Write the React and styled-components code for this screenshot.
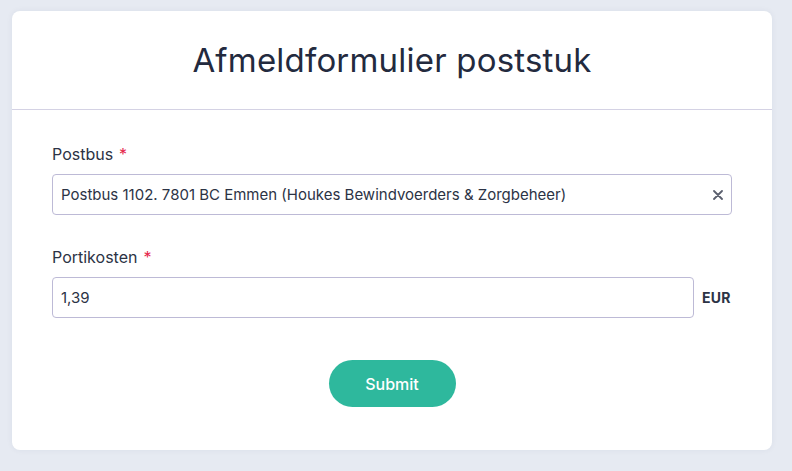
import React from "react";
import styled, { createGlobalStyle } from "styled-components";

const GlobalStyle = createGlobalStyle`
    html, body {
        margin: 0;
        background: #e6eaf2;
        font-family: Inter, "Noto Sans", sans-serif;
    }
`;

const Page = styled.div`
    padding: 11px 20px 22px 12px;
`;

const Card = styled.div`
    background: #fff;
    border-radius: 8px;
    box-shadow: 0 0 6px rgba(40, 50, 80, 0.06);
`;

const Header = styled.div`
    height: 98px;
    display: flex;
    align-items: center;
    justify-content: center;
    border-bottom: 1px solid #d4d2e4;
`;

const Title = styled.h1`
    margin: 0;
    font-size: 33px;
    font-weight: 400;
    color: #232a3e;
    letter-spacing: 0.2px;
`;

const Form = styled.form`
    padding: 34px 40px 43px;
    display: flex;
    flex-direction: column;
`;

const Field = styled.div`
    display: flex;
    flex-direction: column;
    gap: 10px;
    margin-bottom: 32px;
`;

const Label = styled.label`
    font-size: 16px;
    color: #2c3345;
    line-height: 20px;
    span {
        color: #e5264a;
        margin-left: 6px;
    }
`;

const Row = styled.div`
    display: flex;
    align-items: center;
    gap: 8px;
`;

const InputBox = styled.div`
    position: relative;
    flex: 1;
    height: 41px;
    box-sizing: border-box;
    border: 1px solid #bdbad6;
    border-radius: 4px;
    display: flex;
    align-items: center;
    padding: 0 8px;
    font-size: 15px;
    color: #2c3345;
`;

const Value = styled.div`
    flex: 1;
`;

const Clear = styled.span`
    color: #5a5f6e;
    display: flex;
    align-items: center;
`;

const Unit = styled.div`
    font-size: 14px;
    font-weight: 700;
    letter-spacing: 0.3px;
    color: #2c3345;
    width: 30px;
`;

const Actions = styled.div`
    display: flex;
    justify-content: center;
    margin-top: 10px;
`;

const SubmitButton = styled.button`
    width: 127px;
    height: 47px;
    border: none;
    border-radius: 24px;
    background: #2eb89d;
    color: #fff;
    font-family: Inter, sans-serif;
    font-size: 16px;
    font-weight: 500;
`;

const App = () => {
    return (
        <>
            <GlobalStyle />
            <Page>
                <Card>
                    <Header>
                        <Title>Afmeldformulier poststuk</Title>
                    </Header>
                    <Form onSubmit={(e) => e.preventDefault()}>
                        <Field>
                            <Label>
                                Postbus<span>*</span>
                            </Label>
                            <Row>
                                <InputBox>
                                    <Value>
                                        Postbus 1102. 7801 BC Emmen (Houkes
                                        Bewindvoerders &amp; Zorgbeheer)
                                    </Value>
                                    <Clear>
                                        <svg width="10" height="10" viewBox="0 0 10 10">
                                            <path
                                                d="M1 1L9 9M9 1L1 9"
                                                stroke="currentColor"
                                                strokeWidth="1.8"
                                                strokeLinecap="round"
                                            />
                                        </svg>
                                    </Clear>
                                </InputBox>
                            </Row>
                        </Field>
                        <Field>
                            <Label>
                                Portikosten<span>*</span>
                            </Label>
                            <Row>
                                <InputBox>
                                    <Value>1,39</Value>
                                </InputBox>
                                <Unit>EUR</Unit>
                            </Row>
                        </Field>
                        <Actions>
                            <SubmitButton type="submit">Submit</SubmitButton>
                        </Actions>
                    </Form>
                </Card>
            </Page>
        </>
    );
};

export default App;
